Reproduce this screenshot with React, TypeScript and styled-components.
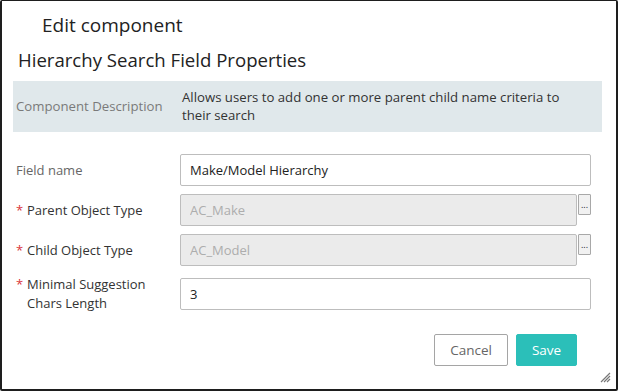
import React from 'react';
import styled, { createGlobalStyle } from 'styled-components';

const GlobalStyle = createGlobalStyle`
  html, body {
    margin: 0;
    padding: 0;
    background: #fff;
  }
  * {
    box-sizing: border-box;
  }
`;

const Dialog = styled.div`
  position: relative;
  width: 618px;
  height: 391px;
  display: flex;
  flex-direction: column;
  border: 2px solid #1e1e1e;
  border-top-width: 1px;
  border-radius: 2px;
  background: #fff;
  font-family: 'Open Sans', 'Noto Sans', sans-serif;
  color: #333;
`;

const Title = styled.h1`
  margin: 0;
  padding: 10px 0 0 40px;
  height: 40px;
  font-size: 19px;
  font-weight: 400;
  color: #222;
  line-height: 28px;
`;

const Heading = styled.h2`
  margin: 0;
  padding: 6px 0 0 16px;
  height: 40px;
  font-size: 18.6px;
  font-weight: 400;
  color: #222;
  line-height: 26px;
`;

const DescBox = styled.div`
  display: grid;
  grid-template-columns: 166px 400px;
  align-items: center;
  margin: 0 14px 0 11px;
  padding: 6px 8px 8px 3px;
  min-height: 51px;
  background: #e0e8eb;
`;

const DescKey = styled.div`
  font-size: 13.2px;
  color: #7a7a7a;
`;

const DescValue = styled.div`
  font-size: 13.2px;
  line-height: 18px;
  color: #333;
`;

const Form = styled.div`
  display: grid;
  grid-template-columns: 164px 411px;
  row-gap: 8px;
  align-items: center;
  padding: 22px 0 0 14px;
`;

const Label = styled.label<{ $required?: boolean }>`
  position: relative;
  font-size: 13px;
  line-height: 19px;
  padding-top: 1px;
  color: ${(p) => (p.$required ? '#333' : '#666')};
  padding-left: ${(p) => (p.$required ? '11px' : '0')};

  &::before {
    content: ${(p) => (p.$required ? "'*'" : "''")};
    position: absolute;
    left: 0;
    top: 1px;
    color: #d9343a;
    font-size: 13px;
  }
`;

const InputWrap = styled.div`
  display: flex;
  align-items: flex-start;
  gap: 1px;
`;

const Input = styled.input`
  flex: 1;
  min-width: 0;
  height: 32px;
  padding: 0 9px;
  border: 1px solid #bdbdbd;
  border-radius: 2px;
  font-family: inherit;
  font-size: 13px;
  color: #222;
  background: #fff;
  outline: none;

  &:disabled {
    background: #ebebeb;
    color: #adadad;
  }
`;

const PickButton = styled.button`
  width: 13px;
  height: 21px;
  padding: 0;
  border: 1px solid #a8a8a8;
  border-radius: 1px;
  background: #f1f1f1;
  font-family: inherit;
  font-size: 9px;
  line-height: 18px;
  color: #223;
  text-align: center;
`;

const Footer = styled.div`
  display: flex;
  justify-content: flex-end;
  gap: 8px;
  padding: 21px 39px 0 0;
`;

const Button = styled.button<{ $primary?: boolean }>`
  height: 32px;
  padding: 0;
  width: ${(p) => (p.$primary ? '61px' : '74px')};
  border: 1px solid ${(p) => (p.$primary ? '#2bbfb9' : '#a5a5a5')};
  border-radius: 2px;
  background: ${(p) => (p.$primary ? '#2bbfb9' : '#fff')};
  color: ${(p) => (p.$primary ? '#fff' : '#666')};
  font-family: inherit;
  font-size: 13.5px;
`;

const Grip = styled.svg`
  position: absolute;
  right: 5px;
  bottom: 6px;
`;

const fields = [
  { label: 'Parent Object Type', value: 'AC_Make' },
  { label: 'Child Object Type', value: 'AC_Model' },
];

export default function App() {
  return (
    <>
      <GlobalStyle />
      <Dialog>
        <Title>Edit component</Title>
        <Heading>Hierarchy Search Field Properties</Heading>
        <DescBox>
          <DescKey>Component Description</DescKey>
          <DescValue>
            Allows users to add one or more parent child name criteria to their search
          </DescValue>
        </DescBox>
        <Form>
          <Label>Field name</Label>
          <InputWrap>
            <Input defaultValue="Make/Model Hierarchy" />
          </InputWrap>
          {fields.map((f) => (
            <React.Fragment key={f.label}>
              <Label $required>{f.label}</Label>
              <InputWrap>
                <Input disabled defaultValue={f.value} />
                <PickButton>...</PickButton>
              </InputWrap>
            </React.Fragment>
          ))}
          <Label $required>
            Minimal Suggestion
            <br />
            Chars Length
          </Label>
          <InputWrap>
            <Input defaultValue="3" />
          </InputWrap>
        </Form>
        <Footer>
          <Button>Cancel</Button>
          <Button $primary>Save</Button>
        </Footer>
        <Grip width="11" height="11" viewBox="0 0 11 11">
          <path d="M10 1 L1 10 M10 4 L4 10 M10 7 L7 10" stroke="#777" strokeWidth="1.2" />
        </Grip>
      </Dialog>
    </>
  );
}
